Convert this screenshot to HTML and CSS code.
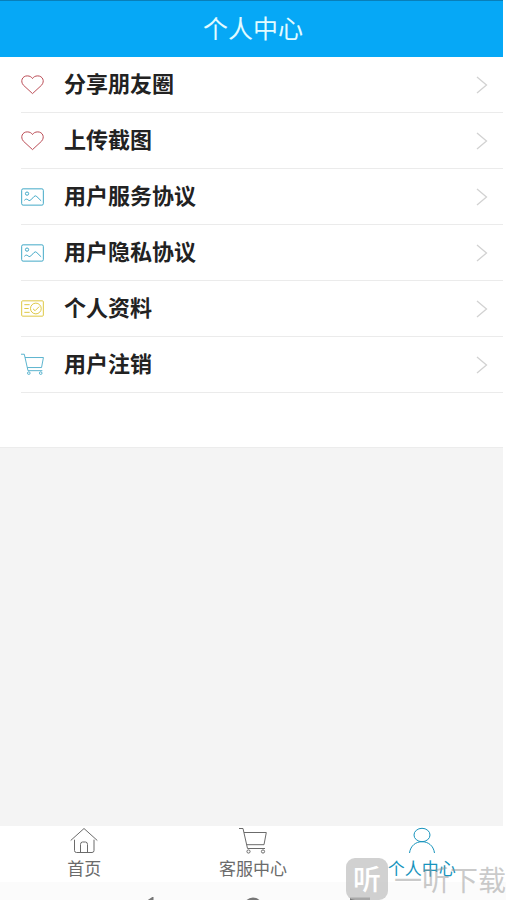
FILE: index.html
```html
<!DOCTYPE html>
<html lang="zh-CN">
<head>
<meta charset="utf-8">
<meta name="viewport" content="width=device-width, initial-scale=1">
<title>个人中心</title>
<link rel="stylesheet" href="styles.css">
</head>
<body>
<svg class="defs" aria-hidden="true">
  <symbol id="heart" viewBox="0 0 24 24"><path d="M12 21.500 2.600 12.800C-1.200 8.500 1.500 3 6.500 3 9.300 3 11 4.200 12 5.800 13 4.200 14.700 3 17.500 3 22.500 3 25.200 8.500 21.400 12.800Z"/></symbol>
  <symbol id="picture" viewBox="0 0 24 24"><rect x=".7" y="4" width="22.600" height="17" rx="1.500"/><circle cx="6.300" cy="9" r="1.700"/><path d="M3.500 16C5 14.500 6 14.200 7.500 15.700 8.800 16.900 10 16 11 14.800L13.500 12.100Q15 10.500 16.500 12.100L21 16.500"/></symbol>
  <symbol id="card" viewBox="0 0 24 24"><rect x=".7" y="4" width="22.600" height="16" rx="1"/><circle cx="15.500" cy="12" r="5.600"/><path d="M12.500 12.300 14.700 14.300 19 10M3.500 8H9M3.500 12H8M3.500 16H9"/></symbol>
  <symbol id="cart" viewBox="0 0 28 28"><path d="M0 1.500H4L8.500 21.500H26M5 5.500H27.300L25 17.700H7.800"/><circle cx="9.500" cy="24.500" r="1.600"/><circle cx="24" cy="24.500" r="1.600"/></symbol>
  <symbol id="home" viewBox="0 0 28 28"><path d="M.7 13.500 14 1.500 27.300 13.500M4.500 12.700V23.500Q4.500 25.500 6.500 25.500H22Q24 25.500 24 23.500V12.700M10.500 25.500V17.500Q10.500 15 12.500 15H15.500Q17.500 15 17.500 17.500V25.500"/></symbol>
  <symbol id="person" viewBox="0 0 28 28"><ellipse cx="14" cy="8" rx="8" ry="6.700"/><path d="M1.500 26C2.500 18.500 8 14.700 14 14.700S25.500 18.500 26.500 26"/></symbol>
  <symbol id="chevron" viewBox="0 0 12 18"><path d="M1 1 10.500 9 1 17"/></symbol>
</svg>
<div class="screen">
  <header class="header"><h1 class="title">个人中心</h1></header>
  <main class="main">
    <ul class="menu">
      <li><a class="row" href="#share"><svg class="icon red"><use href="#heart"/></svg><span class="label">分享朋友圈</span><svg class="chevron"><use href="#chevron"/></svg></a></li>
      <li><a class="row" href="#upload"><svg class="icon red"><use href="#heart"/></svg><span class="label">上传截图</span><svg class="chevron"><use href="#chevron"/></svg></a></li>
      <li><a class="row" href="#service"><svg class="icon blue"><use href="#picture"/></svg><span class="label">用户服务协议</span><svg class="chevron"><use href="#chevron"/></svg></a></li>
      <li><a class="row" href="#privacy"><svg class="icon blue"><use href="#picture"/></svg><span class="label">用户隐私协议</span><svg class="chevron"><use href="#chevron"/></svg></a></li>
      <li><a class="row" href="#profile"><svg class="icon yellow"><use href="#card"/></svg><span class="label">个人资料</span><svg class="chevron"><use href="#chevron"/></svg></a></li>
      <li><a class="row" href="#cancel"><svg class="icon blue"><use href="#cart"/></svg><span class="label">用户注销</span><svg class="chevron"><use href="#chevron"/></svg></a></li>
    </ul>
  </main>
  <nav class="tabs">
    <a class="tab" href="#home"><svg class="tab-icon"><use href="#home"/></svg>首页</a>
    <a class="tab" href="#support"><svg class="tab-icon"><use href="#cart"/></svg>客服中心</a>
    <a class="tab active" href="#me"><svg class="tab-icon"><use href="#person"/></svg>个人中心</a>
  </nav>
  <div class="system-bar" aria-hidden="true">
    <svg class="key" viewBox="0 0 20 20"><path d="M16 2 4 10 16 18Z"/></svg>
    <svg class="key" viewBox="0 0 20 20"><circle cx="10" cy="10" r="8"/></svg>
    <svg class="key" viewBox="0 0 20 20"><rect x="1" y="2" width="18" height="16"/></svg>
  </div>
  <div class="watermark"><span class="badge">听</span><span>一听下载</span></div>
</div>
</body>
</html>
```
FILE: styles.css
```css
* { box-sizing: border-box; }

body {
  margin: 0;
  background: #fff;
  color: #222;
  font-family: "Noto Sans CJK SC", sans-serif;
}

a { color: inherit; text-decoration: none; }

svg {
  display: block;
  flex: none;
  fill: none;
  stroke: currentColor;
}

.defs { position: absolute; width: 0; height: 0; }

.screen {
  position: relative;
  display: flex;
  flex-direction: column;
  height: 100vh;
  overflow: hidden;
}

.header {
  flex: none;
  height: 57px;
  margin-right: 3px;
  border-top: 1px solid #087fb9;
  background: #06a8f6;
  color: #e2fbff;
}

.title {
  margin: 0;
  padding-left: 3px;
  font-size: 25px;
  font-weight: 400;
  line-height: 52px;
  text-align: center;
}

.main {
  flex: 1;
  margin-right: 3px;
  background: #f4f4f4;
}

.menu {
  margin: 0;
  padding: 0 0 54px 21px;
  border-bottom: 1px solid #ececec;
  background: #fff;
  list-style: none;
}

.row {
  display: flex;
  align-items: center;
  gap: 20px;
  height: 56px;
  padding-right: 15px;
  border-bottom: 1px solid #ebebeb;
}

.label {
  flex: 1;
  padding-bottom: 5px;
  font-size: 22px;
  font-weight: 700;
  line-height: 32px;
}

.icon { width: 23px; height: 23px; }
.red { color: #b8464f; }
.blue { color: #3ba5c4; }
.yellow { color: #dcc63c; }

.chevron {
  width: 12px;
  height: 18px;
  color: #d2d2d2;
  stroke-width: 1.3;
}

.tabs {
  display: grid;
  flex: none;
  grid-template-columns: repeat(3, 1fr);
  height: 56px;
  background: #fff;
}

.tab {
  display: flex;
  flex-direction: column;
  align-items: center;
  padding-top: 1px;
  color: #6b6b6b;
  font-size: 17px;
  line-height: 26px;
}

.active { color: #1794bd; }
.tab-icon { width: 28px; height: 28px; }

.system-bar {
  display: flex;
  flex: none;
  justify-content: center;
  gap: 87px;
  height: 18px;
  padding-top: 15px;
  background: #fbfbfb;
  color: #777;
}

.key { width: 20px; height: 20px; stroke-width: 3; }

.watermark {
  position: absolute;
  right: 0;
  bottom: 0;
  display: flex;
  align-items: center;
  gap: 6px;
  color: rgba(150, 150, 150, 0.5);
  font-size: 28px;
  line-height: 40px;
  white-space: nowrap;
  pointer-events: none;
}

.badge {
  width: 42px;
  height: 42px;
  border-radius: 9px;
  background: rgba(190, 190, 190, 0.7);
  color: #fff;
  font-weight: 500;
  text-align: center;
}
```
